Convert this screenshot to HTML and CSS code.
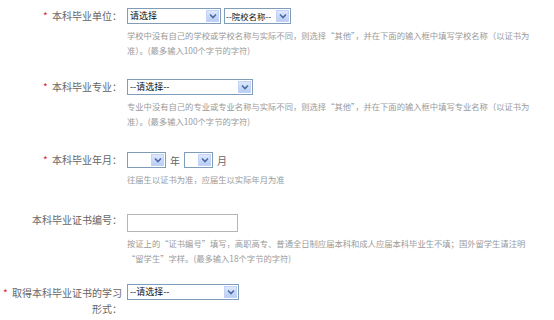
FILE: index.html
```html
<!DOCTYPE html>
<html lang="zh">
<head>
<meta charset="utf-8">
<link rel="stylesheet" href="styles.css">
</head>
<body>
<div class="form">
  <div class="row r1">
    <div class="label"><span class="req">*</span> 本科毕业单位：</div>
    <div class="field">
      <div class="controls">
        <div class="sel w94"><span class="val">请选择</span><span class="btn"><svg width="8" height="6" viewBox="0 0 8 6"><path d="M1 1.5 L4 4.5 L7 1.5" fill="none" stroke="#4a6aa0" stroke-width="1.6"/></svg></span></div>
        <div class="sel w67"><span class="val">--院校名称--</span><span class="btn"><svg width="8" height="6" viewBox="0 0 8 6"><path d="M1 1.5 L4 4.5 L7 1.5" fill="none" stroke="#4a6aa0" stroke-width="1.6"/></svg></span></div>
      </div>
      <p class="hint">学校中没有自己的学校或学校名称与实际不同，则选择“其他”，并在下面的输入框中填写学校名称（以证书为准）。(最多输入100个字节的字符)</p>
    </div>
  </div>

  <div class="row r2">
    <div class="label"><span class="req">*</span> 本科毕业专业：</div>
    <div class="field">
      <div class="controls">
        <div class="sel w126"><span class="val">--请选择--</span><span class="btn"><svg width="8" height="6" viewBox="0 0 8 6"><path d="M1 1.5 L4 4.5 L7 1.5" fill="none" stroke="#4a6aa0" stroke-width="1.6"/></svg></span></div>
      </div>
      <p class="hint">专业中没有自己的专业或专业名称与实际不同，则选择“其他”，并在下面的输入框中填写专业名称（以证书为准）。(最多输入100个字节的字符)</p>
    </div>
  </div>

  <div class="row r3">
    <div class="label"><span class="req">*</span> 本科毕业年月：</div>
    <div class="field">
      <div class="controls">
        <div class="sel w39"><span class="val"></span><span class="btn"><svg width="8" height="6" viewBox="0 0 8 6"><path d="M1 1.5 L4 4.5 L7 1.5" fill="none" stroke="#4a6aa0" stroke-width="1.6"/></svg></span></div>
        <span class="unit">年</span>
        <div class="sel w29"><span class="val"></span><span class="btn"><svg width="8" height="6" viewBox="0 0 8 6"><path d="M1 1.5 L4 4.5 L7 1.5" fill="none" stroke="#4a6aa0" stroke-width="1.6"/></svg></span></div>
        <span class="unit">月</span>
      </div>
      <p class="hint">往届生以证书为准，应届生以实际年月为准</p>
    </div>
  </div>

  <div class="row r4">
    <div class="label">本科毕业证书编号：</div>
    <div class="field">
      <div class="controls">
        <div class="input"></div>
      </div>
      <p class="hint">按证上的“证书编号”填写，高职高专、普通全日制应届本科和成人应届本科毕业生不填；国外留学生请注明<br>“留学生”字样。(最多输入18个字节的字符)</p>
    </div>
  </div>

  <div class="row r5">
    <div class="label"><span class="req">*</span> 取得本科毕业证书的学习形式：</div>
    <div class="field">
      <div class="controls">
        <div class="sel w112"><span class="val">--请选择--</span><span class="btn"><svg width="8" height="6" viewBox="0 0 8 6"><path d="M1 1.5 L4 4.5 L7 1.5" fill="none" stroke="#4a6aa0" stroke-width="1.6"/></svg></span></div>
      </div>
    </div>
  </div>
</div>
</body>
</html>
```

FILE: styles.css
```css
html, body {
  margin: 0;
  padding: 0;
  background: #fff;
}
body {
  font-family: "Noto Sans CJK SC", "Liberation Sans", sans-serif;
  color: #666;
  width: 554px;
  height: 320px;
  overflow: hidden;
}
.form {
  padding-top: 8px;
}
.row {
  display: flex;
  align-items: flex-start;
}
.r1 { margin-bottom: 21px; }
.r2 { margin-bottom: 23px; }
.r3 { margin-bottom: 25px; }
.r4 { margin-bottom: 18px; }
.label {
  width: 122px;
  flex: none;
  text-align: right;
  font-size: 10px;
  line-height: 16px;
  color: #666;
  box-sizing: border-box;
  padding-left: 1px;
}
.r5 .label {
  margin-top: 1px;
}
.req {
  color: #e0262b;
  margin-right: 2px;
}
.field {
  margin-left: 5px;
  flex: 1;
}
.controls {
  display: flex;
  align-items: center;
  gap: 3px;
  height: 16px;
}
.sel {
  box-sizing: border-box;
  height: 16px;
  border: 1px solid #7f9db9;
  background: #fff;
  display: flex;
  align-items: stretch;
  font-size: 9px;
  color: #111;
}
.sel .val {
  flex: 1;
  padding-left: 2px;
  line-height: 14px;
  white-space: nowrap;
  overflow: hidden;
}
.w67 .val {
  font-size: 8.4px;
  padding-left: 1px;
}
.sel .btn {
  width: 13px;
  margin: 1px;
  background: linear-gradient(#dde8fd, #b9cdf7);
  border: 1px solid #c3d3f5;
  box-sizing: border-box;
  display: flex;
  align-items: center;
  justify-content: center;
}
.w94 { width: 94px; }
.w67 { width: 67px; }
.w126 { width: 126px; }
.w39 { width: 39px; }
.w29 { width: 29px; }
.w112 { width: 112px; }
.unit {
  font-size: 10px;
  color: #666;
  margin: 0 1px 0 1px;
}
.input {
  box-sizing: border-box;
  width: 111px;
  height: 18px;
  border: 1px solid #b5b5b5;
  background: #fff;
  margin-top: 4px;
}
.r4 .controls { height: 18px; }
.hint {
  margin: 4px 0 0 0;
  font-size: 8.3px;
  line-height: 15px;
  color: #9a9a9a;
  width: 420px;
}
.r4 .hint { margin-top: 6px; }
```
